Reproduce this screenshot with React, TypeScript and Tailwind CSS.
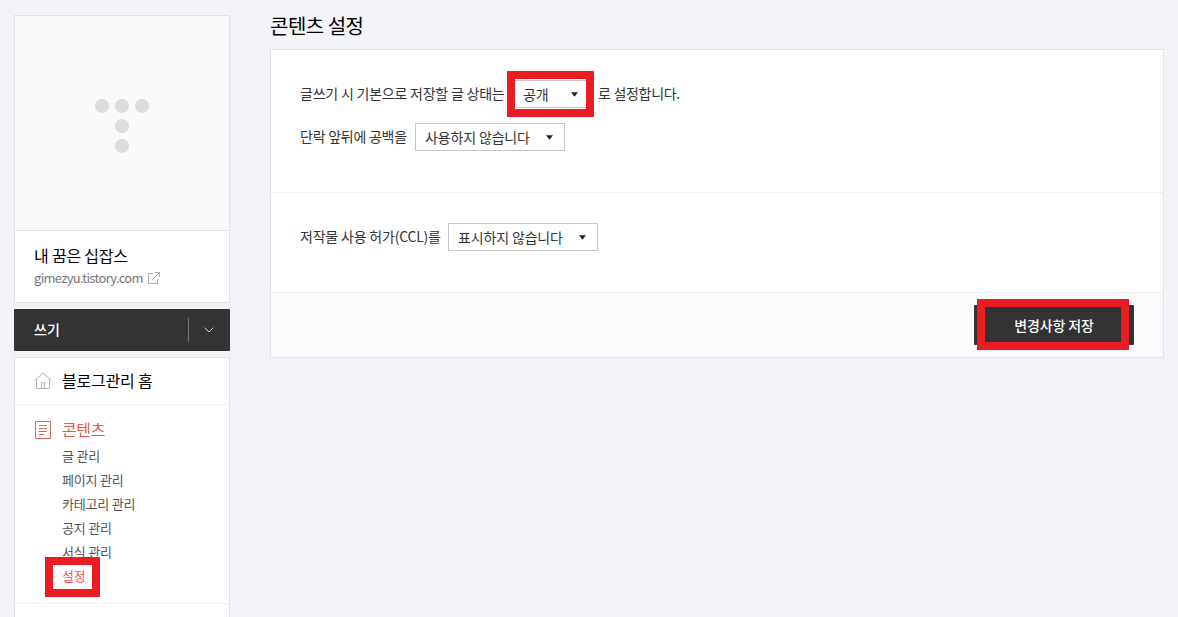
import type { ReactNode } from "react";
import clsx from "clsx";

const CONTENT_MENU = ["글 관리", "페이지 관리", "카테고리 관리", "공지 관리", "서식 관리", "설정"];
const ACTIVE_ITEM = "설정";

export default function App() {
  return (
    <div className="flex h-[617px] w-[1178px] overflow-hidden bg-[#f3f4f7] pl-[14px] font-['Noto_Sans_CJK_KR','Noto_Sans',sans-serif] text-black">
      <Sidebar />
      <main className="ml-10 w-[894px]">
        <h2 className="pt-[12px] h-[49px] text-[20px] leading-[28px] tracking-[-0.5px]">콘텐츠 설정</h2>
        <ContentSettings />
      </main>
    </div>
  );
}

function Sidebar() {
  return (
    <aside className="flex w-[216px] shrink-0 flex-col gap-[6px] pt-[15px]">
      <section className="h-[288px] shrink-0 border border-[#e0e2e6] bg-white">
        <div className="flex h-[214px] items-center justify-center bg-[#fafafa]">
          <BlogLogo />
        </div>
        <div className="border-t border-[#e0e2e6] pl-[19px] pt-[12px]">
          <p className="text-[16px] leading-[24px] tracking-[-0.2px]">내 꿈은 십잡스</p>
          <a className="flex items-center gap-[5px] text-[13px] leading-[22px] text-[#777]">
            <span className="w-[109px] whitespace-nowrap tracking-[-0.7px]">gimezyu.tistory.com</span>
            <ExternalIcon />
          </a>
        </div>
      </section>

      <div className="flex h-[42px] shrink-0 items-center rounded-[1px] bg-[#333] text-white">
        <span className="flex-1 pb-[2px] pl-5 text-[14px] font-medium leading-[20px]">쓰기</span>
        <button className="flex h-6 w-[42px] items-center border-l border-[#777] pl-[15px]">
          <svg width="10" height="6" viewBox="0 0 10 6" fill="none" stroke="#ddd">
            <path d="M.7.7 5 5 9.3.7" />
          </svg>
        </button>
      </div>

      <nav className="h-[270px] shrink-0 border border-[#e0e2e6] bg-white">
        <div className="flex h-[47px] items-center gap-[10px] border-b border-[#f0f1f3] pl-[19px] text-[16px]">
          <HomeIcon />
          <span className="pb-[2px] leading-[24px] tracking-[-0.2px]">블로그관리 홈</span>
        </div>
        <div className="h-[199px] border-b border-[#eeeff2] pt-[13px]">
          <div className="flex h-6 items-center gap-[10px] pl-[19px] text-[16px] text-[#e5594a]">
            <ContentIcon />
            <span className="pb-[2px] leading-[24px] tracking-[-0.4px]">콘텐츠</span>
          </div>
          <ul className="mt-[2px] pl-[47px] text-[13px] leading-[24px] tracking-[-0.2px] text-[#555]">
            {CONTENT_MENU.map((item) => (
              <li key={item} className={clsx("relative h-6", item === ACTIVE_ITEM && "text-[#e5594a]")}>
                {item}
                {item === ACTIVE_ITEM && (
                  <Highlight className="-left-[17px] -top-[7px] h-[40px] w-[55px]" />
                )}
              </li>
            ))}
          </ul>
        </div>
      </nav>
    </aside>
  );
}

function ContentSettings() {
  return (
    <section className="h-[309px] border border-[#e0e2e6] bg-white text-[14px] text-[#333]">
      <div className="flex h-[143px] flex-col gap-[15px] border-b border-[#f0f1f3] pl-[29px] pt-[30px]">
        <Row>
          <span className="w-[205px] tracking-[-0.22px]">글쓰기 시 기본으로 저장할 글 상태는</span>
          <div className="relative">
            <Select value="공개" className="w-[77px]" />
            <Highlight className="-left-[6px] -top-[9px] h-[46px] w-[87px]" />
          </div>
          <span className="tracking-[-0.3px]">로 설정합니다.</span>
        </Row>
        <Row>
          <span className="w-[107px] tracking-[-0.25px]">단락 앞뒤에 공백을</span>
          <Select value="사용하지 않습니다" className="w-[150px]" />
        </Row>
      </div>
      <div className="h-[100px] border-b border-[#eceef1] pl-[29px] pt-[30px]">
        <Row>
          <span className="w-[140px] tracking-[-0.2px]">저작물 사용 허가(CCL)를</span>
          <Select value="표시하지 않습니다" className="w-[150px]" />
        </Row>
      </div>
      <div className="flex h-[64px] justify-end bg-[#fafbfd] pr-[29px] pt-3">
        <div className="relative h-10">
          <button className="h-10 w-[160px] rounded-[1px] bg-[#333] text-[14px] font-medium tracking-[-0.1px] text-white">
            변경사항 저장
          </button>
          <Highlight className="-top-[6px] left-[3px] h-[51px] w-[152px]" />
        </div>
      </div>
    </section>
  );
}

function Row({ children }: { children: ReactNode }) {
  return <div className="flex h-[28px] items-center gap-2 whitespace-nowrap leading-[26px] *:last:shrink-0 [&>span]:pb-[2px]">{children}</div>;
}

function Select({ value, className }: { value: string; className: string }) {
  return (
    <button
      className={clsx(
        "flex h-[28px] items-center justify-between border border-[#c5c9ce] bg-white pl-[9px] pr-[11px]",
        className,
      )}
    >
      <span className="leading-[26px] tracking-[-0.15px]">{value}</span>
      <svg width="7" height="5" viewBox="0 0 7 5" fill="#222">
        <path d="M0 .2h7L3.500 4.800z" />
      </svg>
    </button>
  );
}

// Red outline drawn over the element it marks
function Highlight({ className }: { className: string }) {
  return <span className={clsx("pointer-events-none absolute border-8 border-[#ed1c24]", className)} />;
}

function BlogLogo() {
  return (
    <svg width="54" height="54" viewBox="0 0 54 54" className="mt-[6px]" fill="#dcdcdc">
      <circle cx="7" cy="7" r="7" />
      <circle cx="27" cy="7" r="7" />
      <circle cx="47" cy="7" r="7" />
      <circle cx="27" cy="27" r="7" />
      <circle cx="27" cy="47" r="7" />
    </svg>
  );
}

function ExternalIcon() {
  return (
    <svg width="12" height="12" viewBox="0 0 12 12" fill="none" stroke="#aaa">
      <path d="M5 1.500H.5v10h9V7M7 .5h4.500V5M11.200.8 4.500 7.500" />
    </svg>
  );
}

function HomeIcon() {
  return (
    <svg width="18" height="18" viewBox="0 0 18 18" fill="none" stroke="#b5b5b5">
      <path d="M.5 8.700 9 1l8.500 7.700M2.500 7v9.500h13V7M7.500 16.500v-6h3v6" />
    </svg>
  );
}

function ContentIcon() {
  return (
    <svg width="18" height="18" viewBox="0 0 18 18" fill="none" stroke="#e0685c">
      <path d="M1.500.5h15v17h-15zM5 4.500h8M5 7.500h8M5 10.500h8M5 13.500h5" />
    </svg>
  );
}
